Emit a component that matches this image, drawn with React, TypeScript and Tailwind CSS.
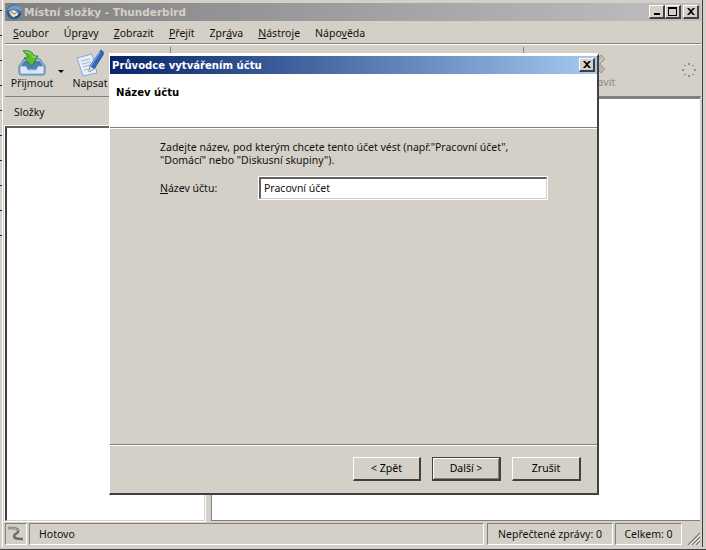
const Sunken = 'border border-t-[#808080] border-l-[#808080] border-r-white border-b-white'
const Raised = 'border-t border-l border-r-2 border-b-2 border-t-white border-l-white border-r-[#404040] border-b-[#404040]'

const menus: [string, string, string][] = [
  ['', 'S', 'oubor'],
  ['Úpr', 'a', 'vy'],
  ['', 'Z', 'obrazit'],
  ['', 'P', 'řejít'],
  ['Zpr', 'á', 'va'],
  ['', 'N', 'ástroje'],
  ['Nápo', 'v', 'ěda'],
]

const BirdIcon = () => (
  <svg width="16" height="16" viewBox="0 0 16 16">
    <circle cx="8" cy="8" r="7.5" fill="#2f5f97" />
    <path d="M1 6C3 2 8 0 13 2c2 1 3 4 2 6-3-3-7-3-14-2z" fill="#6f9bc8" />
    <path d="M3 7c3-1 6-1 9 1 1 2-1 5-4 5-2 0-4-2-5-6z" fill="#e8e4da" />
    <path d="M4 7l4 3 4-2" fill="none" stroke="#b0641e" strokeWidth="1" />
    <path d="M9 13c2 0 4-1 5-3" fill="none" stroke="#16345c" strokeWidth="1" />
  </svg>
)

const GetIcon = () => (
  <svg width="28" height="28" viewBox="0 0 28 28">
    <path d="M1 17l5-7h16l5 7v7c0 1-1 2-2 2H3c-1 0-2-1-2-2z" fill="#a9c9ea" stroke="#4f7cac" />
    <path d="M2 17h6l2 4h8l2-4h6v6c0 1-1 2-2 2H4c-1 0-2-1-2-2z" fill="#dbe9f7" stroke="#5e8bba" strokeWidth="0.7" />
    <path d="M6 12h16l3 5h-5l-2 3h-8l-2-3H3z" fill="#4d7fb5" />
    <path d="M5 2c6-1 10 1 11 5h4l-6 10-8-8 4-1c-1-2-3-4-5-6z" fill="#5ebb32" stroke="#2f8a1a" />
    <path d="M7 3c4 0 7 1 8 5h3" fill="none" stroke="#a8e47c" />
  </svg>
)

const WriteIcon = () => (
  <svg width="28" height="28" viewBox="0 0 28 28">
    <path d="M1 9l15-4 5 19-14 3z" fill="#e6eff9" stroke="#8aa6c6" />
    <path d="M5 12l9-2M6 15l9-2M7 18l7-2M8 21l6-1" stroke="#9fb4cc" fill="none" />
    <path d="M25 1c2 1 3 3 2 5l-9 14-5 3 1-6z" fill="#2f68c4" stroke="#1c3f85" strokeWidth="0.7" />
    <path d="M24 3l-9 14" stroke="#8fb6ee" fill="none" />
    <path d="M13 23l1-6 4 3z" fill="#e9d7b0" />
  </svg>
)

const StopIcon = () => (
  <svg width="22" height="22" viewBox="0 0 22 22">
    <path d="M2 6l4-4 5 5 5-5 4 4-5 5 5 5-4 4-5-5-5 5-4-4 5-5z" fill="#b8b5ae" stroke="#9d9a94" />
    <path d="M4 5l7 7 7-7" fill="none" stroke="#dedbd5" />
  </svg>
)

const Throbber = () => (
  <svg width="14" height="14" viewBox="0 0 14 14" fill="#8f8d88">
    <rect x="6" y="0" width="2" height="2" />
    <rect x="10" y="2" width="2" height="1" />
    <rect x="12" y="6" width="2" height="2" />
    <rect x="10" y="11" width="2" height="1" />
    <rect x="6" y="12" width="2" height="2" />
    <rect x="2" y="11" width="2" height="1" />
    <rect x="0" y="6" width="2" height="2" />
    <rect x="2" y="2" width="2" height="1" />
  </svg>
)

const OfflineIcon = () => (
  <svg width="18" height="18" viewBox="0 0 18 18" fill="none">
    <path d="M1 3h5c4 0 6 2 5 4-1 2-4 2-4 4 0 3 4 3 9 3" stroke="#6d6b66" strokeWidth="2.4" />
    <path d="M1 3h5c3 0 5 1 5 3" stroke="#d8d6d0" strokeWidth="0.8" />
  </svg>
)

const Grip = () => (
  <svg width="13" height="13" viewBox="0 0 13 13">
    <path d="M13 1L1 13M13 5L5 13M13 9L9 13" stroke="#808080" strokeWidth="1.4" />
    <path d="M13 3L3 13M13 7L7 13M13 11L11 13" stroke="#ffffff" />
  </svg>
)

const CloseGlyph = () => (
  <svg width="8" height="7" viewBox="0 0 8 7">
    <path d="M0 0h2l2 2 2-2h2L5 3.500 8 7H6L4 5 2 7H0l3-3.500z" fill="#000" />
  </svg>
)

const CapBtn = ({ children, className = '' }: { children: React.ReactNode; className?: string }) => (
  <div className={`w-4 h-[14px] bg-[#d4d0c8] flex items-center justify-center ${Raised} ${className}`}>{children}</div>
)

const WizardButton = ({ label, active, className = '' }: { label: string; active?: boolean; className?: string }) => (
  <div
    className={`h-[24px] flex items-center justify-center text-[#000] ${className} ${
      active ? 'border border-[#404040] shadow-[inset_1px_1px_0_#fff,inset_-1px_-1px_0_#808080] border-b-2 border-r-2' : Raised
    }`}
  >
    {label}
  </div>
)

export default function App() {
  return (
    <div className="relative w-[706px] h-[550px] overflow-hidden bg-[#d4d0c8] font-['Noto_Sans',sans-serif] text-[10.500px] leading-[13px] text-[#111]">
      <div className="absolute left-0 top-[-14px] h-[254px] w-[2px] bg-[repeating-linear-gradient(180deg,#d4d0c8_0,#d4d0c8_24px,#222_24px,#222_25px)]" />

      <div className="h-[550px] flex flex-col pl-[2px] pr-[3px] pb-[2px] border-b border-[#404040]">
        <div className="flex-1 min-h-0 flex flex-col border-l border-white border-r-[1px] border-r-[#404040] pt-[3px] pl-[2px] pr-[1px] pb-[2px]">
          {/* title bar */}
          <div className="h-[18px] shrink-0 flex items-center pr-[2px] bg-gradient-to-r from-[#808080] to-[#c0c0c0]">
            <div className="ml-[1px]">
              <BirdIcon />
            </div>
            <div className="ml-[2px] font-['DejaVu_Sans',sans-serif] font-bold text-[#d4d0c8]">Místní složky - Thunderbird</div>
            <div className="ml-auto flex">
              <CapBtn>
                <div className="w-[6px] h-[2px] bg-black mt-[5px]" />
              </CapBtn>
              <CapBtn className="mr-[2px]">
                <div className="w-[9px] h-[9px] border border-t-2 border-black" />
              </CapBtn>
              <CapBtn>
                <CloseGlyph />
              </CapBtn>
            </div>
          </div>

          {/* menu */}
          <div className="h-[22px] shrink-0 flex items-center pl-[8px] pt-[2px] gap-[15px] border-b border-[#808080] mt-[1px]">
            {menus.map(([a, u, b]) => (
              <div key={a + u + b} className="whitespace-pre">
                {a}
                <span className="underline">{u}</span>
                {b}
              </div>
            ))}
          </div>

          {/* toolbar */}
          <div className="relative h-[53px] shrink-0 flex border-t border-white border-b border-b-[#808080]">
            <div className="w-[50px] flex flex-col items-center pt-[4px] pl-[4px]">
              <GetIcon />
              <div>Přijmout</div>
            </div>
            <div className="w-0 h-0 mt-[25px] ml-[3px] border-x-[3px] border-x-transparent border-t-[3px] border-t-black" />
            <div className="ml-[8px] flex flex-col items-center pt-[4px] w-[36px]">
              <WriteIcon />
              <div>Napsat</div>
            </div>
            <div className="w-[1px] h-[7px] mt-[2px] ml-[62px] bg-[#808080]" />
            <div className="w-[1px] h-[7px] mt-[2px] ml-[352px] bg-[#808080]" />
            <div className="ml-[52px] flex flex-col items-center pt-[8px] w-[40px] text-[#8c8a85]">
              <StopIcon />
              <div className="mt-[1px]">Zastavit</div>
            </div>
            <div className="ml-auto mr-[5px] mt-[18px]">
              <Throbber />
            </div>
          </div>

          {/* panes */}
          <div className="flex-1 min-h-0 flex pr-[1px]">
            <div className="w-[200px] shrink-0 flex flex-col">
              <div className="h-[29px] shrink-0 flex items-center pl-[9px] pt-[1px]">Složky</div>
              <div className="flex-1 bg-white border-t-2 border-l-2 border-t-[#606060] border-l-[#404040] border-r border-b border-r-[#d4d0c8] border-b-[#d4d0c8] outline outline-1 outline-white" />
            </div>
            <div className="w-[6px] shrink-0" />
            <div className="flex-1 bg-white border-t-2 border-t-[#808080] border-l border-l-[#808080] border-b border-b-[#808080]" />
          </div>

          {/* status bar */}
          <div className="h-[24px] shrink-0 flex gap-[2px] pt-[2px] pr-[19px] relative">
            <div className={`w-[22px] flex items-center justify-center ${Sunken}`}>
              <OfflineIcon />
            </div>
            <div className={`flex-1 flex items-center pl-[9px] ${Sunken}`}>Hotovo</div>
            <div className={`w-[126px] ml-[1px] flex items-center justify-center ${Sunken}`}>Nepřečtené zprávy: 0</div>
            <div className={`w-[67px] flex items-center justify-center ${Sunken}`}>Celkem: 0</div>
            <div className="absolute right-[1px] bottom-0">
              <Grip />
            </div>
          </div>
        </div>
      </div>

      {/* wizard dialog */}
      <div className="absolute left-[109px] top-[53px] w-[490px] h-[442px] flex flex-col bg-[#d4d0c8] border-t-[3px] border-l border-r-2 border-b-2 border-t-white border-l-white border-r-[#404040] border-b-[#404040] text-[#111]">
        <div className="h-[18px] shrink-0 flex items-center pl-[2px] pr-[2px] bg-gradient-to-r from-[#0a246a] to-[#a6caf0]">
          <div className="font-['DejaVu_Sans',sans-serif] text-[10.100px] font-bold text-white">Průvodce vytvářením účtu</div>
          <CapBtn className="ml-auto">
            <CloseGlyph />
          </CapBtn>
        </div>
        <div className="h-[53px] shrink-0 bg-white pl-[6px] pt-[12px] font-['DejaVu_Sans',sans-serif] text-[10.100px] font-bold text-black">Název účtu</div>
        <div className="h-[2px] shrink-0 border-t border-b border-t-[#808080] border-b-white" />
        <div className="flex-1 flex flex-col pl-[50px] pt-[12px]">
          <div>
            Zadejte název, pod kterým chcete tento účet vést (např."Pracovní účet",
            <br />
            "Domácí" nebo "Diskusní skupiny").
          </div>
          <div className="flex items-center mt-[10px]">
            <div className="w-[99px]">
              <span className="underline">N</span>ázev účtu:
            </div>
            <div className="w-[288px] h-[22px] flex items-center pl-[3px] bg-white border-t-2 border-l-2 border-t-[#606060] border-l-[#606060] border-r border-b border-r-[#d4d0c8] border-b-[#d4d0c8] outline outline-1 outline-white">
              Pracovní účet
            </div>
          </div>
        </div>
        <div className="h-[2px] shrink-0 border-t border-b border-t-[#808080] border-b-white" />
        <div className="h-[47px] shrink-0 flex justify-end gap-[11px] pt-[11px] pr-[16px]">
          <WizardButton label="< Zpět" className="w-[68px]" />
          <WizardButton label="Další >" active className="w-[69px]" />
          <WizardButton label="Zrušit" className="w-[69px]" />
        </div>
      </div>
    </div>
  )
}
